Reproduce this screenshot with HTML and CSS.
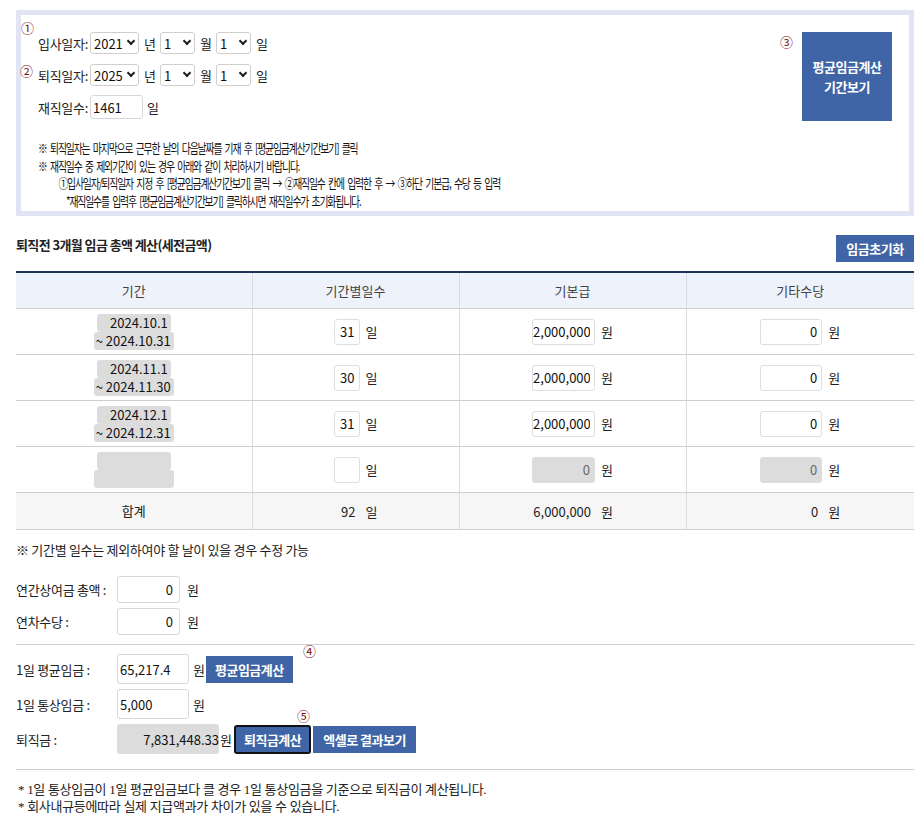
FILE: index.html
```html
<!DOCTYPE html>
<html>
<head>
<title>퇴직금 계산기</title>
<meta content="width=device-width, initial-scale=1" name="viewport" />
<link rel="stylesheet" href="styles.css">
</head>

<body>
<div class='wrap'>

  <!-- 입사 / 퇴직 일자 -->
  <div class='dateBox'>
    <div class='dateForm'>
      <div class='dRow row1'>
        <span class='num num1'>&#9312;</span>
        <span class='lbl'>입사일자:</span>
        <span class='selBox'><select class='selY'><option>2021</option></select></span> <span class='unit'>년</span>
        <span class='selBox'><select class='selM'><option>1</option></select></span> <span class='unit'>월</span>
        <span class='selBox'><select class='selM'><option>1</option></select></span> <span class='unit'>일</span>
      </div>
      <div class='dRow row2'>
        <span class='num num2'>&#9313;</span>
        <span class='lbl'>퇴직일자:</span>
        <span class='selBox'><select class='selY'><option>2025</option></select></span> <span class='unit'>년</span>
        <span class='selBox'><select class='selM'><option>1</option></select></span> <span class='unit'>월</span>
        <span class='selBox'><select class='selM'><option>1</option></select></span> <span class='unit'>일</span>
      </div>
      <div class='dRow row3'>
        <span class='lbl'>재직일수:</span><input class='inpDays' type='text' value='1461'> <span class='unit unitDays'>일</span>
      </div>

      <div class='notes'>
        <p>※ 퇴직일자는 마지막으로 근무한 날의 다음날짜를 기재 후 [평균임금계산기간보기] 클릭</p>
        <p>※ 재직일수 중 제외기간이 있는 경우 아래와 같이 처리하시기 바랍니다.</p>
        <p class='ind1'>①입사일자/퇴직일자 지정 후 [평균임금계산기간보기] 클릭 → ②재직일수 칸에 입력한 후 → ③하단 기본급, 수당 등 입력</p>
        <p class='ind2'>*재직일수를 입력후 [평균임금계산기간보기] 클릭하시면 재직일수가 초기화됩니다.</p>
      </div>
    </div>
    <div class='periodBtnWrap'>
      <span class='num num3'>&#9314;</span>
      <button class='btn btnPeriod'>평균임금계산<br>기간보기</button>
    </div>
  </div>

  <!-- 3개월 임금 -->
  <div class='secHdr'>
    <h3>퇴직전 3개월 임금 총액 계산(세전금액)</h3>
    <button class='btn btnReset'>임금초기화</button>
  </div>

  <table class='payTbl'>
    <colgroup>
      <col class='c1'><col class='c2'><col class='c3'><col class='c4'>
    </colgroup>
    <thead>
      <tr><th>기간</th><th>기간별일수</th><th>기본급</th><th>기타수당</th></tr>
    </thead>
    <tbody>
      <tr>
        <td><div class='period'><input class='pFrom' value='2024.10.1' readonly><input class='pTo' value='~ 2024.10.31' readonly></div></td>
        <td><input class='inpDay' value='31'> <span class='unit'>일</span></td>
        <td><input class='inpPay' value='2,000,000'> <span class='unit'>원</span></td>
        <td><input class='inpEtc' value='0'> <span class='unit'>원</span></td>
      </tr>
      <tr>
        <td><div class='period'><input class='pFrom' value='2024.11.1' readonly><input class='pTo' value='~ 2024.11.30' readonly></div></td>
        <td><input class='inpDay' value='30'> <span class='unit'>일</span></td>
        <td><input class='inpPay' value='2,000,000'> <span class='unit'>원</span></td>
        <td><input class='inpEtc' value='0'> <span class='unit'>원</span></td>
      </tr>
      <tr>
        <td><div class='period'><input class='pFrom' value='2024.12.1' readonly><input class='pTo' value='~ 2024.12.31' readonly></div></td>
        <td><input class='inpDay' value='31'> <span class='unit'>일</span></td>
        <td><input class='inpPay' value='2,000,000'> <span class='unit'>원</span></td>
        <td><input class='inpEtc' value='0'> <span class='unit'>원</span></td>
      </tr>
      <tr>
        <td><div class='period'><input class='pFrom' value='' readonly><input class='pTo' value='' readonly></div></td>
        <td><input class='inpDay' value=''> <span class='unit'>일</span></td>
        <td><input class='inpPay dis' value='0' readonly> <span class='unit'>원</span></td>
        <td><input class='inpEtc dis' value='0' readonly> <span class='unit'>원</span></td>
      </tr>
    </tbody>
    <tfoot>
      <tr>
        <td>합계</td>
        <td><span class='sum sumDay'>92</span> <span class='unit'>일</span></td>
        <td><span class='sum sumPay'>6,000,000</span> <span class='unit'>원</span></td>
        <td><span class='sum sumEtc'>0</span> <span class='unit'>원</span></td>
      </tr>
    </tfoot>
  </table>

  <p class='tblNote'>※ 기간별 일수는 제외하여야 할 날이 있을 경우 수정 가능</p>

  <div class='frm frmBonus'>
    <div class='fRow'><span class='fLbl'>연간상여금 총액 :</span><input class='inpS' value='0'> <span class='unit'>원</span></div>
    <div class='fRow'><span class='fLbl'>연차수당 :</span><input class='inpS' value='0'> <span class='unit'>원</span></div>
  </div>

  <div class='frm frmResult'>
    <div class='fRow'>
      <span class='fLbl'>1일 평균임금 :</span><input class='inpL' value='65,217.4'> <span class='unit'>원</span>
      <span class='btnWrap bw1'><span class='num num4'>&#9315;</span><button class='btn btnSm'>평균임금계산</button></span>
    </div>
    <div class='fRow'>
      <span class='fLbl'>1일 통상임금 :</span><input class='inpL' value='5,000'> <span class='unit'>원</span>
    </div>
    <div class='fRow'>
      <span class='fLbl'>퇴직금 :</span><input class='inpTot' value='7,831,448.33' readonly><span class='unit unitTot'>원</span>
      <span class='btnWrap bw2'><span class='num num5'>&#9316;</span><button class='btn btnSm btnFocus'>퇴직금계산</button></span>
      <button class='btn btnSm btnExcel'>엑셀로 결과보기</button>
    </div>
  </div>

  <div class='footNote'>
    <p>* 1일 통상임금이 1일 평균임금보다 클 경우 1일 통상임금을 기준으로 퇴직금이 계산됩니다.</p>
    <p>* 회사내규등에따라 실제 지급액과가 차이가 있을 수 있습니다.</p>
  </div>

</div>
</body>
</html>
```

FILE: styles.css
```css
*, body {
  margin: 0;
  padding: 0;
  box-sizing: border-box;
}
body {
  font-family: "Noto Sans CJK KR", "Noto Sans", sans-serif;
  font-size: 13px;
  color: #222;
  background: #fff;
}
.wrap {
  margin: 10px 10px 0 16px;
}
input, select, button {
  font-family: "Noto Sans CJK KR", "Noto Sans", sans-serif;
  font-size: 13px;
  color: #111;
}
.unit {
  margin-left: 3px;
}
.num {
  position: absolute;
  color: #7a1010;
  font-size: 13px;
  line-height: 13px;
}

/* date box */
.dateBox {
  display: flex;
  justify-content: space-between;
  border: 5px solid #e1e5f3;
  padding: 17px 17px 1px 17px;
}
.dateForm {
  flex: 1;
}
.dRow {
  position: relative;
  display: flex;
  align-items: center;
  height: 22px;
}
.row1 {
  margin-bottom: 10px;
}
.row2 {
  margin-bottom: 9px;
}
.row3 {
  height: 24px;
}
.num1 {
  left: -17px;
  top: -11px;
}
.num2 {
  left: -18px;
  top: 0;
}
.lbl {
  letter-spacing: -0.3px;
  margin-right: 2px;
}
.selBox {
  position: relative;
  display: inline-block;
  height: 22px;
}
.selBox::after {
  content: '';
  position: absolute;
  right: 5px;
  top: 6px;
  width: 4px;
  height: 4px;
  border-right: 2px solid #222;
  border-bottom: 2px solid #222;
  transform: rotate(45deg);
  pointer-events: none;
}
.selBox select {
  -webkit-appearance: none;
  appearance: none;
  height: 22px;
  border: 1px solid #cfcfcf;
  border-radius: 3px;
  background: #fff;
  padding: 0 0 0 3px;
}
.selY {
  width: 49px;
}
.selM {
  width: 35px;
}
.dRow .unit {
  margin: 0 4px 0 5px;
}
.inpDays {
  width: 53px;
  height: 24px;
  border: 1px solid #d8d8d8;
  border-radius: 3px;
  padding-left: 2px;
}
.dRow .unitDays {
  margin-left: 4px;
}
.notes {
  margin-top: 20px;
  font-size: 13px;
  letter-spacing: -1.5px;
  word-spacing: 3px;
  line-height: 17.7px;
  transform: scaleX(0.755);
  transform-origin: left top;
  white-space: nowrap;
  color: #111;
}
.notes .ind1 {
  padding-left: 27px;
}
.notes .ind2 {
  padding-left: 37px;
}
.periodBtnWrap {
  position: relative;
  padding-left: 20px;
}
.num3 {
  left: -2px;
  top: 3px;
}
.btn {
  background: #4065a6;
  color: #fff;
  font-weight: bold;
  border: none;
  cursor: pointer;
  letter-spacing: -0.5px;
}
.btnPeriod {
  width: 90px;
  height: 89px;
  line-height: 20px;
}

/* section header */
.secHdr {
  display: flex;
  justify-content: space-between;
  align-items: flex-start;
  margin-top: 19px;
  height: 36px;
}
.secHdr h3 {
  font-size: 13px;
  letter-spacing: -0.6px;
  line-height: 18px;
  margin-top: 1px;
}
.btnReset {
  width: 78px;
  height: 27px;
}

/* table */
.payTbl {
  width: 898px;
  border-collapse: collapse;
  table-layout: fixed;
  border-top: 2px solid #1d3557;
}
.c1 { width: 236px; }
.c2 { width: 207px; }
.c3 { width: 227px; }
.c4 { width: 228px; }
.payTbl th {
  background: #eef2fa;
  font-weight: normal;
  color: #444;
  height: 37px;
  line-height: 18px;
  border-bottom: 1px solid #cfcfcf;
  border-left: 1px solid #dcdcdc;
}
.payTbl td {
  text-align: center;
  height: 46px;
  line-height: 18px;
  border-bottom: 1px solid #cfcfcf;
  border-left: 1px solid #dcdcdc;
}
.payTbl th:first-child, .payTbl td:first-child {
  border-left: none;
}
.payTbl tfoot td {
  height: 37px;
  background: #f6f6f6;
  border-top: 1.5px solid #1d3557;
}
.payTbl input {
  height: 26px;
  border: 1px solid #dedede;
  border-radius: 3px;
  text-align: right;
  padding-right: 4px;
  vertical-align: middle;
}
.payTbl .unit {
  margin-left: 3px;
  vertical-align: middle;
}
.inpDay {
  width: 26px;
}
.inpPay {
  width: 63px;
}
.inpEtc {
  width: 62px;
}
.payTbl input.dis {
  background: #dcdcdc;
  border-color: #dcdcdc;
  color: #666;
}
.period {
  display: flex;
  flex-direction: column;
  align-items: center;
}
.payTbl .period input {
  height: 18px;
  border: none;
  border-radius: 3px;
  background: #dcdcdc;
  padding-right: 3px;
  font-size: 13px;
}
.pFrom {
  width: 74px;
}
.pTo {
  width: 80px;
}
.sum {
  display: inline-block;
  text-align: right;
  padding-right: 4px;
  vertical-align: middle;
}
.sumDay {
  width: 26px;
}
.sumPay {
  width: 63px;
}
.sumEtc {
  width: 62px;
}

.tblNote {
  margin-top: 11px;
  line-height: 18px;
  letter-spacing: -0.3px;
}

/* lower forms */
.frmBonus {
  padding: 17px 0 4px 0;
  border-bottom: 1px solid #cfcfcf;
}
.fRow {
  display: flex;
  align-items: center;
  margin-bottom: 5px;
}
.fLbl {
  width: 101px;
  letter-spacing: -0.3px;
}
.inpS {
  width: 63px;
  height: 27px;
  border: 1px solid #d8d8d8;
  border-radius: 3px;
  text-align: right;
  padding-right: 6px;
}
.frm .unit {
  margin-left: 7px;
}
.frmResult {
  padding: 9px 0 10px 0;
  border-bottom: 1px solid #cfcfcf;
}
.inpL {
  width: 72px;
  height: 30px;
  border: 1px solid #d8d8d8;
  border-radius: 3px;
  padding-left: 2px;
}
.frmResult .unit {
  margin-left: 4px;
}
.inpTot {
  width: 102px;
  height: 30px;
  border: none;
  border-radius: 3px;
  background: #dcdcdc;
  text-align: right;
  padding-right: 0;
}
.frmResult .unitTot {
  margin-left: 1px;
}
.btnWrap {
  position: relative;
  display: inline-block;
}
.btnSm {
  height: 27px;
  padding: 0 9px;
}
.bw1 {
  margin-left: 1px;
}
.bw2 {
  margin-left: 2px;
}
.num4 {
  left: 97px;
  top: -12px;
}
.num5 {
  left: 63px;
  top: -16px;
}
.btnFocus {
  border: 2px solid #111;
  border-radius: 3px;
  height: 29px;
  padding: 0 8px;
}
.btnExcel {
  margin-left: 2px;
  padding: 0 10px;
}

.footNote {
  padding-top: 11px;
  font-family: "Liberation Serif", "Noto Sans CJK KR", serif;
  font-size: 13px;
  line-height: 17px;
  letter-spacing: -0.3px;
}
.footNote p {
  padding-left: 2px;
}
```
